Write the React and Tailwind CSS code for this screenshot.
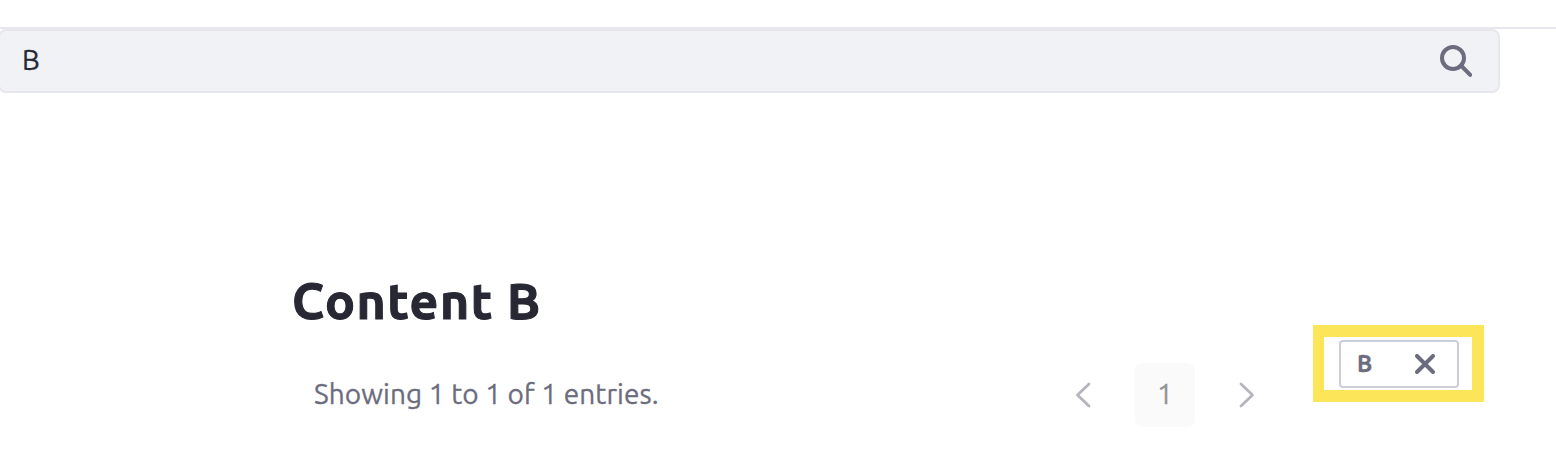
function SearchIcon() {
  return (
    <svg className="h-8 w-8 shrink-0" viewBox="0 0 32 32" fill="none" stroke="#6b6c7e" strokeWidth="4">
      <circle cx="13" cy="13" r="11" />
      <path d="M21 20.5 30.2 29.8" strokeLinecap="round" />
    </svg>
  );
}

function Chevron({ d }) {
  return (
    <svg className="h-[26px] w-4 shrink-0" viewBox="0 0 16 26" fill="none" stroke="#b5b5be" strokeWidth="2.8" strokeLinecap="round" strokeLinejoin="round">
      <path d={d} />
    </svg>
  );
}

function CloseIcon() {
  return (
    <svg className="h-5 w-5 shrink-0" viewBox="0 0 20 20" fill="none" stroke="#6b6c7e" strokeWidth="4" strokeLinecap="round">
      <path d="M2 2 18 18M18 2 2 18" />
    </svg>
  );
}

function Pagination() {
  return (
    <nav className="mt-[38px] flex h-16 w-[180px] items-center justify-between">
      <button aria-label="Previous"><Chevron d="M14 2 2.5 13 14 24" /></button>
      <button className="flex h-16 w-[60px] items-center justify-center rounded-lg bg-[#fafafa] pb-0.5 text-[28px] text-[#939393] [-webkit-text-stroke:0.3px_#939393]">1</button>
      <button aria-label="Next"><Chevron d="M2 2 13.5 13 2 24" /></button>
    </nav>
  );
}

export default function App() {
  return (
    <div className="h-[476px] w-[1556px] overflow-hidden bg-white font-['Ubuntu','Noto_Sans',sans-serif]">
      <header className="h-[29px] border-b-2 border-[#e7e7ed]" />
      <div className="-ml-0.5 flex h-16 w-[1502px] items-center justify-between rounded-lg border-2 border-[#e7e7ed] bg-[#f1f2f5] pr-[26px] pl-[22px]">
        <span className="pb-0.5 text-[28px] leading-10 text-[#272833] [-webkit-text-stroke:0.3px_#272833]">B</span>
        <SearchIcon />
      </div>
      <main className="flex pt-[170px] pl-[292px]">
        <section className="w-[783px]">
          <h1 className="mt-1.5 text-[50px] leading-[62px] font-bold tracking-[1.5px] whitespace-nowrap text-[#272833] [-webkit-text-stroke:1.1px_#272833]">
            Content B
          </h1>
          <p className="mt-[43px] pl-[22px] text-[28px] leading-10 tracking-[0.09px] whitespace-nowrap text-[#6b6c7e] [-webkit-text-stroke:0.3px_#6b6c7e]">
            Showing 1 to 1 of 1 entries.
          </p>
        </section>
        <div className="pt-[62px]">
          <Pagination />
        </div>
        <div className="mt-[62px] ml-[58px] h-[77px] w-[171px] border-12 border-l-11 border-[#fde55a] pt-[3px] pl-[15px]">
          <div className="flex h-12 w-[120px] items-center justify-between rounded border-2 border-[#cdced9] pr-[22px] pl-4 text-[23px] font-bold text-[#6b6c7e] [-webkit-text-stroke:0.3px_#6b6c7e]">
            <span className="leading-8">B</span>
            <CloseIcon />
          </div>
        </div>
      </main>
    </div>
  );
}
